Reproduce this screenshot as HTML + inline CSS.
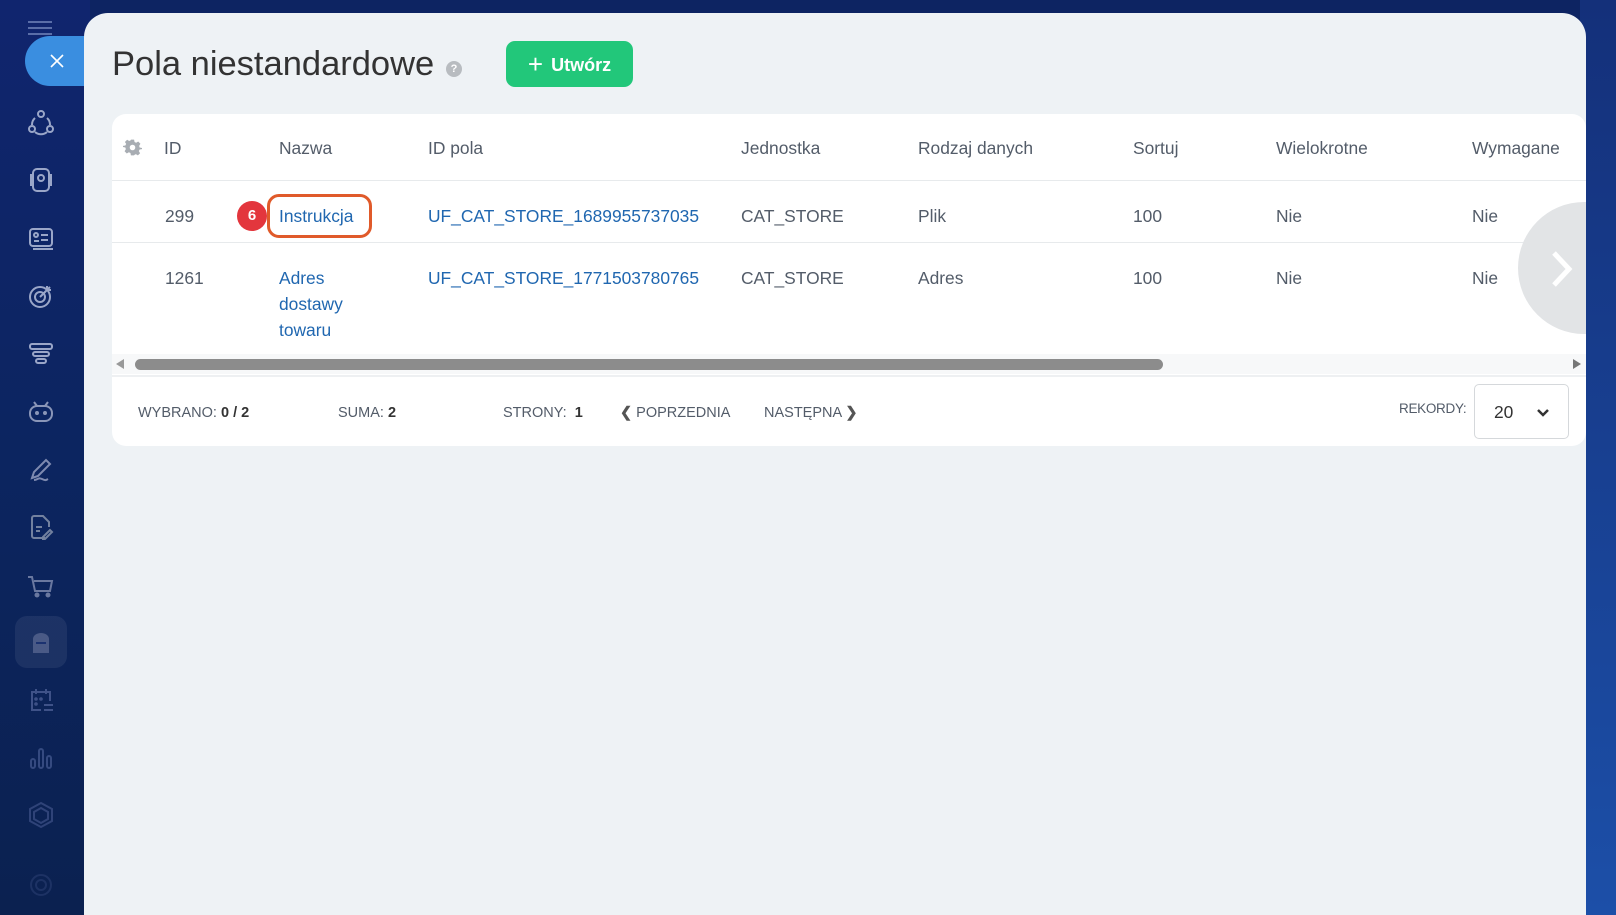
<!DOCTYPE html>
<html><head><meta charset="utf-8"><style>
*{margin:0;padding:0;box-sizing:border-box}
html,body{width:1616px;height:915px;overflow:hidden}
body{background:#0d2462;font-family:"Liberation Sans",sans-serif;position:relative}
.side{position:absolute;left:0;top:0;width:90px;height:915px;background:linear-gradient(180deg,#10256e 0%,#0c2560 50%,#0b2150 100%)}
.panel{position:absolute;left:84px;top:13px;width:1502px;height:930px;background:#eef2f5;border-radius:24px 24px 0 0}
.rstrip{position:absolute;left:1580px;top:0;width:36px;height:915px;background:linear-gradient(180deg,#14307a,#1c4fa8)}
.abs{position:absolute}
.title{left:112px;top:45px;font-size:34.5px;color:#333;white-space:nowrap}
.q{left:446px;top:61px;width:16px;height:16px;border-radius:50%;background:#b8bcc0;color:#fff;font-size:11px;font-weight:bold;text-align:center;line-height:16px}
.btn{left:506px;top:41px;width:127px;height:46px;border-radius:9px;background:#22c77a;color:#fff;font-weight:bold;font-size:18px;line-height:46px;text-align:center}
.card{left:112px;top:114px;width:1474px;height:332px;background:#fff;border-radius:14px;overflow:hidden}
.t{position:absolute;font-size:17.4px;color:#535c69;white-space:nowrap}
.l{color:#2067b0}
.line{position:absolute;left:0;width:1474px;height:1px;background:#e7eaec}
.f{position:absolute;font-family:"Liberation Sans Narrow","Liberation Sans",sans-serif;font-size:14.5px;color:#535c69;white-space:nowrap}
.f b{color:#333}
.ic{position:absolute;left:25px;width:32px;height:32px}
</style></head><body>
<div class="side"></div>
<div class="rstrip"></div>
<!-- sidebar -->
<div class="abs" style="left:28px;top:21px;width:24px;height:2px;background:#5a6ea8"></div>
<div class="abs" style="left:28px;top:27px;width:24px;height:2px;background:#5a6ea8"></div>
<div class="abs" style="left:28px;top:33px;width:24px;height:2px;background:#5a6ea8"></div>
<div class="abs" style="left:25px;top:36px;width:60px;height:50px;border-radius:25px 0 0 25px;background:#3a8ee0"></div>
<svg class="abs" style="left:49px;top:53px" width="16" height="16" viewBox="0 0 16 16"><path d="M2 2l12 12M14 2L2 14" stroke="#fff" stroke-width="1.6"/></svg>
<svg class="ic" style="top:107px" viewBox="0 0 32 32" fill="none" stroke="#9aa6c8" stroke-width="2"><circle cx="16" cy="7" r="3"/><circle cx="7" cy="22" r="3"/><circle cx="25" cy="22" r="3"/><path d="M10 11a9 9 0 0 0-3 7M22 11a9 9 0 0 1 3 7M10 25a9 9 0 0 0 12 0"/></svg>
<svg class="ic" style="top:164px" viewBox="0 0 32 32" fill="none" stroke="#9aa6c8" stroke-width="2"><rect x="8" y="5" width="16" height="22" rx="4"/><circle cx="16" cy="14" r="3"/><path d="M6 10v12M26 10v12"/></svg>
<svg class="ic" style="top:222px" viewBox="0 0 32 32" fill="none" stroke="#9aa6c8" stroke-width="2"><rect x="5" y="7" width="22" height="17" rx="3"/><circle cx="11" cy="13" r="2"/><path d="M9 19h5M16 13h7M16 18h7M8 27h20"/></svg>
<svg class="ic" style="top:280px" viewBox="0 0 32 32" fill="none" stroke="#9aa6c8" stroke-width="2"><circle cx="15" cy="17" r="10"/><circle cx="15" cy="17" r="5"/><path d="M15 17l10-10M22 6v4h4"/></svg>
<svg class="ic" style="top:337px" viewBox="0 0 32 32" fill="none" stroke="#9aa6c8" stroke-width="2"><rect x="5" y="7" width="22" height="5" rx="2"/><rect x="8" y="15" width="16" height="4" rx="2"/><rect x="11" y="22" width="10" height="4" rx="2"/></svg>
<svg class="ic" style="top:395px" viewBox="0 0 32 32" fill="none" stroke="#8a96b8" stroke-width="2"><rect x="5" y="11" width="22" height="15" rx="7"/><path d="M9 7l3 4M23 7l-3 4"/><circle cx="12" cy="18" r="1"/><circle cx="20" cy="18" r="1"/></svg>
<svg class="ic" style="top:453px" viewBox="0 0 32 32" fill="none" stroke="#7e8ab0" stroke-width="2"><path d="M7 25l2-6L21 7l4 4-12 12zM9 27c4 0 4-3 8-1s4 1 6 0"/></svg>
<svg class="ic" style="top:511px" viewBox="0 0 32 32" fill="none" stroke="#73819f" stroke-width="2"><path d="M20 27H9a2 2 0 0 1-2-2V7a2 2 0 0 1 2-2h9l6 6v5M11 16h6M11 20h4M18 26l7-7 2 2-7 7h-2z"/></svg>
<svg class="ic" style="top:569px" viewBox="0 0 32 32" fill="none" stroke="#6a78a0" stroke-width="2"><path d="M3 8h4l3 14h15l2-10H9"/><circle cx="12" cy="26" r="1.5" fill="#6a78a0"/><circle cx="23" cy="26" r="1.5" fill="#6a78a0"/></svg>
<div class="abs" style="left:15px;top:616px;width:52px;height:52px;border-radius:12px;background:rgba(255,255,255,0.07)"></div>
<svg class="ic" style="top:626px" viewBox="0 0 32 32"><path d="M8 27V13a8 6 0 0 1 16 0v14z" fill="#4a5a86"/><rect x="11" y="16" width="10" height="2" fill="#1b3270"/></svg>
<svg class="ic" style="top:684px" viewBox="0 0 32 32" fill="none" stroke="#3f5288" stroke-width="2"><path d="M16 26H7V8h18v9M11 5v5M21 5v5M19 21h9M19 26h9"/><circle cx="11" cy="15" r=".8"/><circle cx="16" cy="15" r=".8"/><circle cx="11" cy="20" r=".8"/></svg>
<svg class="ic" style="top:741px" viewBox="0 0 32 32" fill="none" stroke="#354a80" stroke-width="2"><rect x="6" y="18" width="4" height="9" rx="2"/><rect x="14" y="8" width="4" height="19" rx="2"/><rect x="22" y="15" width="4" height="12" rx="2"/></svg>
<svg class="ic" style="top:799px" viewBox="0 0 32 32" fill="none" stroke="#2f4378" stroke-width="2"><path d="M16 4l11 6v12l-11 6-11-6V10z"/><path d="M16 9l7 4v7l-7 4-7-4v-7z"/></svg>
<svg class="ic" style="top:869px" viewBox="0 0 32 32" fill="none" stroke="#1d3264" stroke-width="2"><circle cx="16" cy="16" r="5"/><circle cx="16" cy="16" r="10"/></svg>

<div class="panel"></div>
<div class="abs title">Pola niestandardowe</div>
<div class="abs q">?</div>
<div class="abs btn"><span style="font-size:26px;font-weight:normal;vertical-align:-2px;margin-right:8px">+</span>Utwórz</div>

<div class="abs card">
<svg style="position:absolute;left:11px;top:24px" width="19" height="19" viewBox="0 0 24 24"><path fill="#a8adb3" d="M10 2h4l.6 3 2 1 2.6-1.6 2.8 2.8L20.4 10l.6 2 3 .6v-1.2V14l-3 .6-1 2 1.6 2.6-2.8 2.8-2.6-1.6-2 1L14 22h-4l-.6-3-2-1-2.6 1.6-2.8-2.8L3.6 14 3 12l-3-.6V14v-4l3-.6 1-2L2.4 5 5.2 2.2 7.8 3.8l2-1z"/><circle cx="12" cy="12" r="3.5" fill="#fff"/></svg>
<div class="t" style="left:52px;top:24px">ID</div>
<div class="t" style="left:167px;top:24px">Nazwa</div>
<div class="t" style="left:316px;top:24px">ID pola</div>
<div class="t" style="left:629px;top:24px">Jednostka</div>
<div class="t" style="left:806px;top:24px">Rodzaj danych</div>
<div class="t" style="left:1021px;top:24px">Sortuj</div>
<div class="t" style="left:1164px;top:24px">Wielokrotne</div>
<div class="t" style="left:1360px;top:24px">Wymagane</div>
<div class="line" style="top:66px"></div>

<div class="t" style="left:53px;top:92px">299</div>
<div style="position:absolute;left:125px;top:87px;width:30px;height:30px;border-radius:50%;background:#e3363d;color:#fff;font-weight:bold;font-size:15px;line-height:30px;text-align:center">6</div>
<div style="position:absolute;left:155px;top:80px;width:105px;height:44px;border:3px solid #e05a2a;border-radius:12px"></div>
<div class="t l" style="left:167px;top:92px">Instrukcja</div>
<div class="t l" style="left:316px;top:92px">UF_CAT_STORE_1689955737035</div>
<div class="t" style="left:629px;top:92px">CAT_STORE</div>
<div class="t" style="left:806px;top:92px">Plik</div>
<div class="t" style="left:1021px;top:92px">100</div>
<div class="t" style="left:1164px;top:92px">Nie</div>
<div class="t" style="left:1360px;top:92px">Nie</div>
<div class="line" style="top:128px"></div>

<div class="t l" style="left:167px;top:151px;line-height:26px">Adres<br>dostawy<br>towaru</div>
<div class="t" style="left:53px;top:154px">1261</div>
<div class="t l" style="left:316px;top:154px">UF_CAT_STORE_1771503780765</div>
<div class="t" style="left:629px;top:154px">CAT_STORE</div>
<div class="t" style="left:806px;top:154px">Adres</div>
<div class="t" style="left:1021px;top:154px">100</div>
<div class="t" style="left:1164px;top:154px">Nie</div>
<div class="t" style="left:1360px;top:154px">Nie</div>

<div style="position:absolute;left:1406px;top:88px;width:132px;height:132px;border-radius:50%;background:#e2e4e6"></div>
<svg style="position:absolute;left:1434px;top:134px" width="30" height="42" viewBox="0 0 30 42"><path d="M8 5l15 16-15 16" fill="none" stroke="#fff" stroke-width="5"/></svg>

<div style="position:absolute;left:0;top:240px;width:1474px;height:20px;background:#f7f8f9"></div>
<div style="position:absolute;left:4px;top:245px;width:0;height:0;border-top:5px solid transparent;border-bottom:5px solid transparent;border-right:8px solid #999"></div>
<div style="position:absolute;left:1461px;top:245px;width:0;height:0;border-top:5px solid transparent;border-bottom:5px solid transparent;border-left:8px solid #777"></div>
<div style="position:absolute;left:23px;top:245px;width:1028px;height:11px;border-radius:6px;background:#8c8c8c"></div>
<div class="line" style="top:261px;height:2px;background:#eef0f2"></div>

<div class="f" style="left:26px;top:291px">WYBRANO: <b>0 / 2</b></div>
<div class="f" style="left:226px;top:291px">SUMA: <b>2</b></div>
<div class="f" style="left:391px;top:291px">STRONY:&nbsp; <b>1</b></div>
<div class="f" style="left:508px;top:291px"><b style="color:#555">❮</b> POPRZEDNIA</div>
<div class="f" style="left:652px;top:291px">NASTĘPNA <b style="color:#555">❯</b></div>
<div class="f" style="left:1287px;top:287px;font-size:13.5px;letter-spacing:-0.3px">REKORDY:</div>
<div style="position:absolute;left:1362px;top:270px;width:95px;height:55px;border:1px solid #d5d8db;border-radius:5px"></div>
<div class="t" style="left:1382px;top:288px;color:#333">20</div>
<svg style="position:absolute;left:1424px;top:294px" width="14" height="10" viewBox="0 0 14 10"><path d="M2 2l5 5 5-5" fill="none" stroke="#333" stroke-width="2.5"/></svg>
</div>
</body></html>
